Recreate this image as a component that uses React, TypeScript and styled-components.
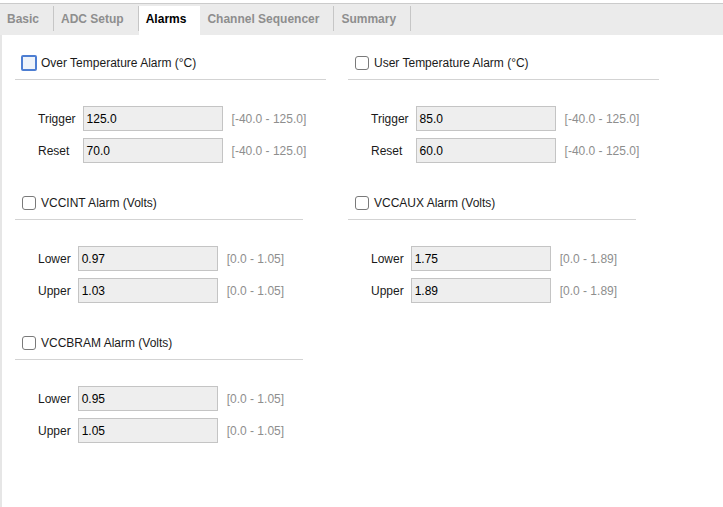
import React from "react";
import styled, { createGlobalStyle, css } from "styled-components";

interface IField {
  label: string;
  value: string;
  range: string;
}

interface IAlarm {
  title: string;
  width: number;
  focused?: boolean;
  fields: IField[];
}

const TABS = ["Basic", "ADC Setup", "Alarms", "Channel Sequencer", "Summary"];
const ACTIVE_TAB = "Alarms";

const TEMP_RANGE = "[-40.0 - 125.0]";

const ALARMS: IAlarm[] = [
  {
    title: "Over Temperature Alarm (°C)",
    width: 311,
    focused: true,
    fields: [
      { label: "Trigger", value: "125.0", range: TEMP_RANGE },
      { label: "Reset", value: "70.0", range: TEMP_RANGE },
    ],
  },
  {
    title: "User Temperature Alarm (°C)",
    width: 311,
    fields: [
      { label: "Trigger", value: "85.0", range: TEMP_RANGE },
      { label: "Reset", value: "60.0", range: TEMP_RANGE },
    ],
  },
  {
    title: "VCCINT Alarm (Volts)",
    width: 288,
    fields: [
      { label: "Lower", value: "0.97", range: "[0.0 - 1.05]" },
      { label: "Upper", value: "1.03", range: "[0.0 - 1.05]" },
    ],
  },
  {
    title: "VCCAUX Alarm (Volts)",
    width: 288,
    fields: [
      { label: "Lower", value: "1.75", range: "[0.0 - 1.89]" },
      { label: "Upper", value: "1.89", range: "[0.0 - 1.89]" },
    ],
  },
  {
    title: "VCCBRAM Alarm (Volts)",
    width: 288,
    fields: [
      { label: "Lower", value: "0.95", range: "[0.0 - 1.05]" },
      { label: "Upper", value: "1.05", range: "[0.0 - 1.05]" },
    ],
  },
];

const AlarmSection = ({ alarm }: { alarm: IAlarm }) => (
  <Section $width={alarm.width}>
    <SectionHeader>
      <CheckBox $focused={alarm.focused} />
      <HeaderLabel>{alarm.title}</HeaderLabel>
    </SectionHeader>
    <FieldGrid>
      {alarm.fields.map((field) => (
        <React.Fragment key={field.label}>
          <FieldLabel>{field.label}</FieldLabel>
          <ValueBox>{field.value}</ValueBox>
          <RangeText>{field.range}</RangeText>
        </React.Fragment>
      ))}
    </FieldGrid>
  </Section>
);

const App = () => {
  return (
    <>
      <GlobalStyle />
      <Page>
        <TabBar>
          {TABS.map((tab) => (
            <Tab key={tab} $active={tab === ACTIVE_TAB}>
              {tab}
            </Tab>
          ))}
        </TabBar>
        <Content>
          <SectionGrid>
            {ALARMS.map((alarm) => (
              <AlarmSection key={alarm.title} alarm={alarm} />
            ))}
          </SectionGrid>
        </Content>
      </Page>
    </>
  );
};

const GlobalStyle = createGlobalStyle`
  html, body {
    margin: 0;
    padding: 0;
    background: #ffffff;
  }

  body {
    font-family: "Liberation Sans", Arial, sans-serif;
    font-size: 12px;
    color: #1a1a1a;
  }
`;

const Page = styled.div`
  width: 723px;
  height: 507px;
  display: flex;
  flex-direction: column;
  overflow: hidden;
  background: #ffffff;
`;

const TabBar = styled.div`
  margin-top: 3px;
  height: 32px;
  box-sizing: border-box;
  border-top: 1px solid #cbcbcb;
  background: #ebebeb;
  display: flex;
  align-items: flex-end;
`;

const Tab = styled.div<{ $active?: boolean }>`
  position: relative;
  height: 29px;
  line-height: 27px;
  box-sizing: border-box;
  padding: 0 15px 0 7px;
  font-weight: 700;
  font-size: 12px;
  color: #8e8e8e;
  white-space: nowrap;

  &::after {
    content: "";
    position: absolute;
    right: 0;
    top: 0;
    bottom: 4px;
    width: 1px;
    background: #c6c6c6;
  }

  ${(p) =>
    p.$active &&
    css`
      background: #ffffff;
      color: #000000;
      padding-right: 14px;

      &::after {
        display: none;
      }
    `}
`;

const Content = styled.div`
  flex: 1;
  border-left: 2px solid #e6e6e6;
  padding: 11px 0 0 13px;
`;

const SectionGrid = styled.div`
  display: grid;
  grid-template-columns: 333px auto;
  row-gap: 23px;
  align-items: start;
`;

const Section = styled.div<{ $width: number }>`
  width: ${(p) => p.$width}px;
  display: flex;
  flex-direction: column;
`;

const SectionHeader = styled.div`
  height: 33px;
  display: flex;
  align-items: center;
  padding-left: 7px;
  border-bottom: 1px solid #d3d3d3;
`;

const CheckBox = styled.span<{ $focused?: boolean }>`
  width: 14px;
  height: 14px;
  box-sizing: border-box;
  border: 1px solid #7a7a7a;
  border-radius: 3px;
  background: #ffffff;
  margin-right: 5px;
  flex-shrink: 0;

  ${(p) =>
    p.$focused &&
    css`
      border: 2px solid #4d7ed2;
      border-radius: 2px;
      background: #eef3fa;
      width: 16px;
      height: 16px;
      margin: 0 4px 0 -1px;
    `}
`;

const HeaderLabel = styled.span`
  font-size: 12px;
  color: #1a1a1a;
`;

const FieldGrid = styled.div`
  display: grid;
  grid-template-columns: auto 140px auto;
  column-gap: 7px;
  row-gap: 7px;
  align-items: center;
  justify-content: start;
  margin-top: 26px;
  padding-left: 23px;
`;

const FieldLabel = styled.span`
  font-size: 12px;
  color: #1a1a1a;
`;

const ValueBox = styled.div`
  height: 25px;
  box-sizing: border-box;
  border: 1px solid #c4c4c4;
  background: #eeeeee;
  padding-left: 3px;
  display: flex;
  align-items: center;
  font-size: 12px;
  color: #000000;
`;

const RangeText = styled.span`
  margin-left: 2px;
  font-size: 12px;
  color: #8e8e8e;
`;

export default App;
